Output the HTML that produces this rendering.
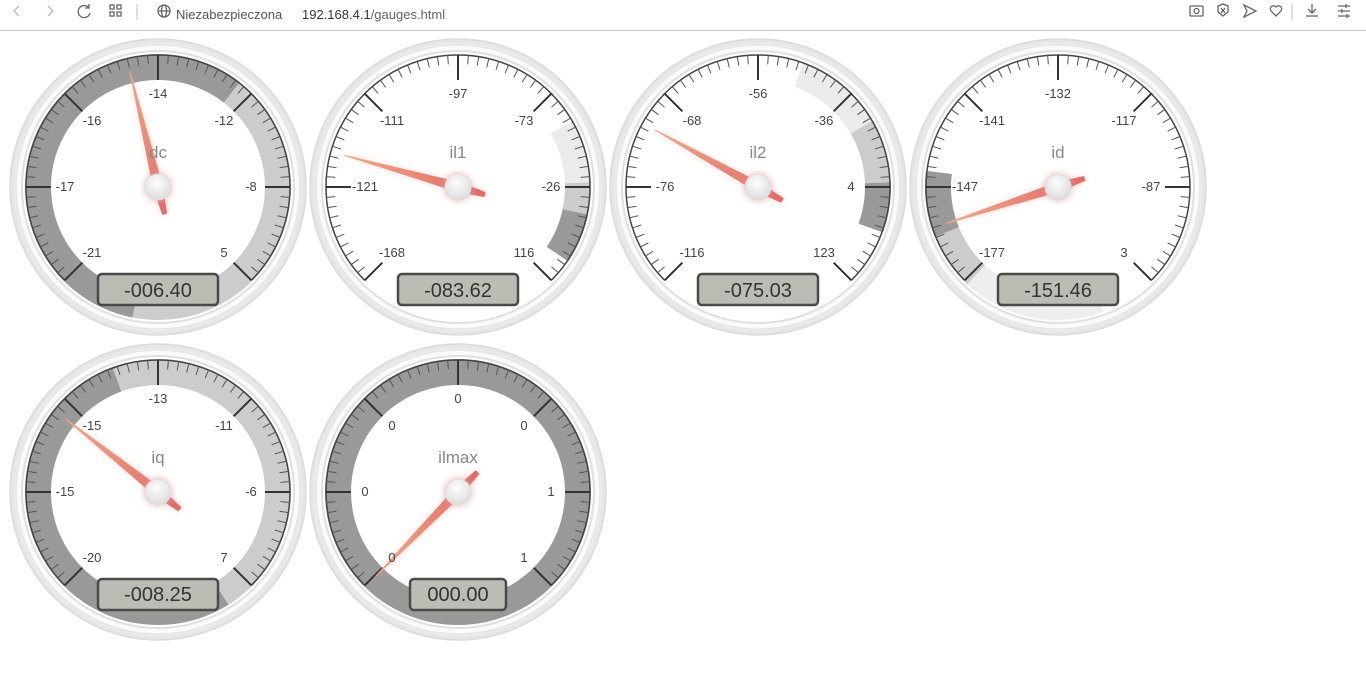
<!DOCTYPE html>
<html><head><meta charset="utf-8"><style>
body{margin:0;width:1366px;height:678px;background:#fff;overflow:hidden;font-family:"Liberation Sans",sans-serif}
#bar{height:30px;border-bottom:1px solid #c8c8c8;position:relative;font-size:13px;color:#333}
#bar span{position:absolute;top:7px}
svg text{font-family:"Liberation Sans",sans-serif}
</style></head><body>
<div id="bar">
<svg width="1366" height="30" style="position:absolute;left:0;top:0" fill="none" stroke="#666" stroke-width="1.3">
<path d="M19 6l-5 5 5 5" stroke="#bbb"/><path d="M48 6l5 5-5 5" stroke="#bbb"/>
<path d="M89 8a6 6 0 1 0 1 5M89 4v4h-4"/>
<rect x="110" y="5" width="4" height="4"/><rect x="117" y="5" width="4" height="4"/><rect x="110" y="12" width="4" height="4"/><rect x="117" y="12" width="4" height="4"/>
<path d="M137 4v16" stroke="#ccc"/>
<circle cx="164" cy="11" r="6"/><ellipse cx="164" cy="11" rx="2.5" ry="6"/><path d="M158 11h12"/>
<rect x="1190" y="6" width="13" height="10" rx="1"/><circle cx="1196.5" cy="11" r="2.5"/>
<path d="M1218 6l5-2 5 2v6l-5 4-5-4z"/><path d="M1221 8l4 5M1225 8l-4 5"/>
<path d="M1244 5l12 6-12 6 3-6z"/>
<path d="M1276 16l-5-5a3 3 0 0 1 5-4a3 3 0 0 1 5 4z"/>
<path d="M1292 4v16" stroke="#ccc"/>
<path d="M1312 4v8M1308 9l4 4 4-4M1306 16h12"/>
<path d="M1338 6h12M1338 11h12M1338 16h12M1346 4v4M1342 9v4M1347 14v4"/>
</svg>
<span style="left:176px;color:#555">Niezabezpieczona</span>
<span style="left:302px">192.168.4.1<span style="position:static;color:#666">/gauges.html</span></span>
</div>
<svg id="g" width="1366" height="648" style="position:absolute;left:0;top:30px">
<defs>
<radialGradient id="bez" cx="50%" cy="50%" r="50%"><stop offset="0.9" stop-color="#fdfdfd"/><stop offset="1" stop-color="#e2e2e2"/></radialGradient>
<radialGradient id="knob" cx="45%" cy="35%" r="70%"><stop offset="0" stop-color="#fdfdfd"/><stop offset="1" stop-color="#dadada"/></radialGradient>
<linearGradient id="nd" x1="0" y1="0" x2="0" y2="1"><stop offset="0" stop-color="#f0a888"/><stop offset="1" stop-color="#e06a6a"/></linearGradient>
<filter id="sh" x="-50%" y="-50%" width="200%" height="200%"><feGaussianBlur stdDeviation="3"/></filter>
</defs>
<g id="layer"></g>
<g id="txt" font-size="13" fill="#444" text-anchor="middle">
<g transform="translate(158,157)">
<text x="-66" y="70">-21</text><text x="-93" y="4">-17</text><text x="-66" y="-62">-16</text><text x="0" y="-89">-14</text><text x="66" y="-62">-12</text><text x="93" y="4">-8</text><text x="66" y="70">5</text>
<text y="-29" font-size="17" fill="#888">dc</text></g>
<g transform="translate(458,157)">
<text x="-66" y="70">-168</text><text x="-93" y="4">-121</text><text x="-66" y="-62">-111</text><text x="0" y="-89">-97</text><text x="66" y="-62">-73</text><text x="93" y="4">-26</text><text x="66" y="70">116</text>
<text y="-29" font-size="17" fill="#888">il1</text></g>
<g transform="translate(758,157)">
<text x="-66" y="70">-116</text><text x="-93" y="4">-76</text><text x="-66" y="-62">-68</text><text x="0" y="-89">-56</text><text x="66" y="-62">-36</text><text x="93" y="4">4</text><text x="66" y="70">123</text>
<text y="-29" font-size="17" fill="#888">il2</text></g>
<g transform="translate(1058,157)">
<text x="-66" y="70">-177</text><text x="-93" y="4">-147</text><text x="-66" y="-62">-141</text><text x="0" y="-89">-132</text><text x="66" y="-62">-117</text><text x="93" y="4">-87</text><text x="66" y="70">3</text>
<text y="-29" font-size="17" fill="#888">id</text></g>
<g transform="translate(158,462)">
<text x="-66" y="70">-20</text><text x="-93" y="4">-15</text><text x="-66" y="-62">-15</text><text x="0" y="-89">-13</text><text x="66" y="-62">-11</text><text x="93" y="4">-6</text><text x="66" y="70">7</text>
<text y="-29" font-size="17" fill="#888">iq</text></g>
<g transform="translate(458,462)">
<text x="-66" y="70">0</text><text x="-93" y="4">0</text><text x="-66" y="-62">0</text><text x="0" y="-89">0</text><text x="66" y="-62">0</text><text x="93" y="4">1</text><text x="66" y="70">1</text>
<text y="-29" font-size="17" fill="#888">ilmax</text></g>
</g>
<g id="vals" font-size="20" fill="#333" text-anchor="middle">
<text x="158" y="267">-006.40</text><text x="458" y="267">-083.62</text><text x="758" y="267">-075.03</text><text x="1058" y="267">-151.46</text><text x="158" y="571">-008.25</text><text x="458" y="571">000.00</text>
</g>
</svg>
<script>
var NS="http://www.w3.org/2000/svg";
var L=document.getElementById('layer');
function el(n,a,p){var e=document.createElementNS(NS,n);for(var k in a)e.setAttribute(k,a[k]);(p||L).appendChild(e);return e}
function P(r,a){a=a*Math.PI/180;return [r*Math.sin(a),-r*Math.cos(a)]}
function sect(r1,r2,a0,a1){var p1=P(r2,a0),p2=P(r2,a1),p3=P(r1,a1),p4=P(r1,a0),lg=(a1-a0)>180?1:0;
return "M"+p1+"A"+r2+","+r2+" 0 "+lg+" 1 "+p2+"L"+p3+"A"+r1+","+r1+" 0 "+lg+" 0 "+p4+"Z"}
var G=[
{x:158,y:157,n:-13.7,bw:120,h:[[191,398,"#999"],[38,191,"#ccc"]]},
{x:458,y:157,n:-74.4,bw:120,h:[[60,88,"#ebebeb"],[88,102,"#ccc"],[102,124,"#999"]]},
{x:758,y:157,n:-61,bw:120,h:[[20,60,"#ebebeb"],[60,88,"#ccc"],[88,110,"#999"]]},
{x:1058,y:157,n:-108,bw:120,h:[[160,223,"#eeeeee"],[223,248,"#ccc"],[248,277,"#999"]]},
{x:158,y:462,n:-51.6,bw:120,h:[[148,340,"#999"],[-20,148,"#ccc"]]},
{x:458,y:462,n:-135.7,bw:96,h:[[0,360,"#999"]]}];
G.forEach(function(g){
 var t=el('g',{transform:'translate('+g.x+','+g.y+')'});
 el('circle',{r:148,fill:'url(#bez)',stroke:'#dcdcdc','stroke-width':1.5},t);
 el('circle',{r:142,fill:'#fafafa',stroke:'#e6e6e6','stroke-width':1.5},t);
 el('circle',{r:136,fill:'#fff',stroke:'#e0e0e0','stroke-width':2},t);
 g.h.forEach(function(h){ if(h[1]-h[0]>=359){el('path',{d:sect(107,133,0,180)+sect(107,133,180,359.99),fill:h[2]},t)}else el('path',{d:sect(107,133,h[0],h[1]),fill:h[2]},t)});
 el('path',{d:"M"+P(132,-135)+"A132,132 0 1 1 "+P(132,135),fill:'none',stroke:'#444','stroke-width':1.5},t);
 for(var i=0;i<=60;i++){var a=-135+i*4.5;
  if(i%10==0){el('line',{x1:P(132,a)[0],y1:P(132,a)[1],x2:P(107,a)[0],y2:P(107,a)[1],stroke:'#333','stroke-width':2},t)}
  else{el('line',{x1:P(132,a)[0],y1:P(132,a)[1],x2:P(123,a)[0],y2:P(123,a)[1],stroke:'#555','stroke-width':1},t)}}
 var w=g.bw;el('rect',{x:-w/2,y:87,width:w,height:31,rx:4,fill:'#bdbcb4',stroke:'#4a4a4a','stroke-width':2.5},t);
 var n=el('g',{transform:'rotate('+g.n+')'},t);
 el('polygon',{points:'0,-118 -1,-118 -5,0 -3,28 3,28 5,0',fill:'#f0b0a0',opacity:.5,filter:'url(#sh)'},n);
 el('polygon',{points:'0.5,-118 -0.5,-118 -5,0 -2.5,28 2.5,28 5,0',fill:'url(#nd)'},n);
 el('circle',{r:15,fill:'#e8a0a0',opacity:.5,filter:'url(#sh)'},t);
 el('circle',{r:13,fill:'url(#knob)',stroke:'#ddd','stroke-width':1},t);
});
</script>
</body></html>
